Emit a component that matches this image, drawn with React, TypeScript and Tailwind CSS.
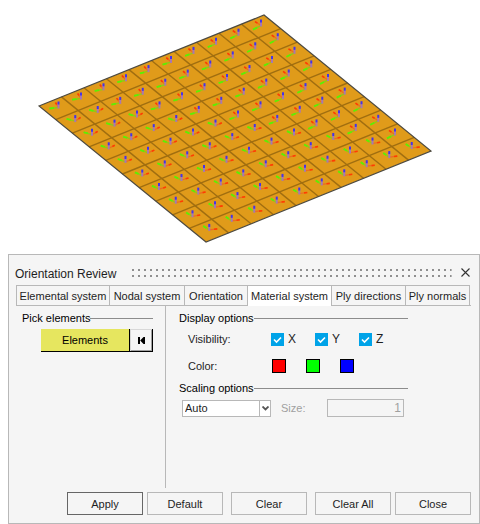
import { useState } from 'react';

const TABS = [
  { name: 'Elemental system', width: 'w-[94px]' },
  { name: 'Nodal system', width: 'w-[76px]' },
  { name: 'Orientation', width: 'w-[64px]' },
  { name: 'Material system', width: 'w-[85px]' },
  { name: 'Ply directions', width: 'w-[75px]' },
  { name: 'Ply normals', width: 'w-[65px]' },
];

const AXES = ['X', 'Y', 'Z'];

const COLORS = [
  { axis: 'X', fill: 'bg-[#ff0000]' },
  { axis: 'Y', fill: 'bg-[#00ff00]' },
  { axis: 'Z', fill: 'bg-[#0000ff]' },
];

const CELLS = 10;

// corners of the plate
const LEFT = [39, 106];
const TOP = [264, 15];
const RIGHT = [431, 151];
const BOTTOM = [206, 242];

const mix = (a: number, b: number, t: number) => a + (b - a) * t;

function Triad({ i, j }: { i: number; j: number }) {
  const x = 58.5 + 22.5 * i + 16.75 * j;
  const y = 107.5 - 9.1 * i + 13.6 * j;
  // the material axes flip across the diagonal of the mesh
  const above = i > j || (i === 0 && j === 0);
  const t = (above ? i : j) / (CELLS - 1);
  const red = above ? [mix(-3, -6, t), mix(-5, -4, t)] : [mix(5, 8, t), mix(-4, -1, t)];
  const green = above ? [mix(-9, -8, t), mix(1, 4, t)] : [mix(-9, -6, t), mix(-2, -4, t)];

  return (
    <g transform={`translate(${x} ${y})`} strokeWidth="1">
      <line x1="0" y1="0" x2={green[0]} y2={green[1]} stroke="#90c818" strokeWidth="1.4" />
      <line x1={green[0] * 0.5} y1={green[1] * 0.5} x2={green[0]} y2={green[1]} stroke="#5cf000" strokeWidth="1.8" />
      <line x1="0" y1="0" x2={red[0]} y2={red[1]} stroke="#ec6a20" strokeWidth="1.2" />
      <line x1={red[0] * 0.6} y1={red[1] * 0.6} x2={red[0]} y2={red[1]} stroke="#ff3d00" strokeWidth="1.6" />
      <line x1="0" y1="1" x2="0" y2="-4" stroke="#a878b0" strokeWidth="2" />
      <line x1="0" y1="-3" x2="0" y2="-6" stroke="#4434e8" strokeWidth="2" />
    </g>
  );
}

function Plate() {
  const steps = Array.from({ length: CELLS }, (_, n) => n);
  return (
    <svg viewBox="0 0 480 254" className="block w-full" role="img" aria-label="Plate mesh">
      <polygon points={[LEFT, TOP, RIGHT, BOTTOM].join(' ')} fill="#e09b1a" />
      {steps.slice(1).map((n) => {
        const t = n / CELLS;
        return (
          <g key={n} stroke="#a06e10" strokeWidth="1.4">
            <line
              x1={mix(LEFT[0], TOP[0], t)}
              y1={mix(LEFT[1], TOP[1], t)}
              x2={mix(BOTTOM[0], RIGHT[0], t)}
              y2={mix(BOTTOM[1], RIGHT[1], t)}
            />
            <line
              x1={mix(LEFT[0], BOTTOM[0], t)}
              y1={mix(LEFT[1], BOTTOM[1], t)}
              x2={mix(TOP[0], RIGHT[0], t)}
              y2={mix(TOP[1], RIGHT[1], t)}
            />
          </g>
        );
      })}
      <polygon points={[LEFT, TOP, RIGHT, BOTTOM].join(' ')} fill="none" stroke="#4d4a40" strokeWidth="1.2" />
      {steps.map((j) => steps.map((i) => <Triad key={`${i}-${j}`} i={i} j={j} />))}
    </svg>
  );
}

function GroupTitle({ children }: { children: string }) {
  return (
    <h3 className="flex h-4 items-center whitespace-nowrap text-black">
      {children}
      <span className="h-px flex-1 bg-[#8c8c8c]" />
    </h3>
  );
}

function AxisCheck({ axis }: { axis: string }) {
  return (
    <label className="flex w-11 items-center gap-1 text-[12px]">
      <span className="grid">
        <input
          type="checkbox"
          defaultChecked
          className="peer col-start-1 row-start-1 size-[13px] appearance-none border border-[#00a3e8] checked:bg-[#00a3e8]"
        />
        <svg
          viewBox="0 0 13 13"
          className="pointer-events-none invisible col-start-1 row-start-1 size-[13px] peer-checked:visible"
        >
          <path d="M3 6.5 L5.5 9 L10 4.5" fill="none" stroke="#fff" strokeWidth="1.6" />
        </svg>
      </span>
      {axis}
    </label>
  );
}

function ActionButton({ label, primary }: { label: string; primary?: boolean }) {
  return (
    <button
      type="button"
      className={`h-[23px] w-[76px] border bg-[#f5f5f5] ${primary ? 'border-[#666666]' : 'border-[#b8b8b8]'}`}
    >
      {label}
    </button>
  );
}

export default function App() {
  const [activeTab, setActiveTab] = useState('Material system');

  return (
    <div className="bg-white font-['Liberation_Sans',Arial,sans-serif] text-[11px] leading-4 text-[#1e1e1e]">
      <Plate />
      <section className="ml-2 border border-[#b8b8b8] bg-[#f5f5f5]">
        <header className="flex h-[30px] items-end gap-3 pr-2 pl-1.5">
          <h2 className="text-[12px] leading-[22px] whitespace-nowrap">Orientation Review</h2>
          <svg className="mb-2 ml-1 h-2 min-w-0 flex-1" aria-hidden="true">
            <defs>
              <pattern id="grip" width="6" height="6" patternUnits="userSpaceOnUse">
                <rect width="2" height="2" fill="#8f8f8f" />
              </pattern>
            </defs>
            <rect width="100%" height="8" fill="url(#grip)" />
          </svg>
          <button type="button" aria-label="Close panel" className="mb-[7px] -ml-1 p-px">
            <svg viewBox="0 0 9 9" className="size-[9px]">
              <path d="M0.5 0.5 L8.5 8.5 M8.5 0.5 L0.5 8.5" stroke="#333" strokeWidth="1.1" />
            </svg>
          </button>
        </header>

        <div role="tablist" className="mr-2 ml-[7px] flex h-[21px] border-b border-[#b8b8b8]">
          {TABS.map((tab) => {
            const active = tab.name === activeTab;
            return (
              <button
                key={tab.name}
                type="button"
                role="tab"
                aria-selected={active}
                onClick={() => setActiveTab(tab.name)}
                className={`-mr-px shrink-0 border border-b-0 border-[#b8b8b8] whitespace-nowrap ${tab.width} ${
                  active ? '-mb-px bg-white' : ''
                }`}
              >
                {tab.name}
              </button>
            );
          })}
        </div>

        <div className="flex h-[182px]">
          <div className="w-[157px] border-r border-[#b8b8b8] pt-1 pr-3 pl-[13px]">
            <GroupTitle>Pick elements</GroupTitle>
            <div className="mt-[3px] ml-[19px] flex h-[23px]">
              <button type="button" className="flex-1 border-r border-b border-black bg-[#e6e65f] text-black">
                Elements
              </button>
              <button
                type="button"
                aria-label="Reset selection"
                className="flex w-[23px] items-center justify-center border-r border-b border-black bg-[#f5f5f5] shadow-[inset_1px_1px_0_#d8d8d8,inset_-1px_-1px_0_#a0a0a0]"
              >
                <svg viewBox="0 0 7 7" className="size-[7px]">
                  <path d="M0 0 H2 V7 H0 Z M7 0 V7 H5.5 L2.2 3.5 L5.5 0 Z" fill="#000" />
                </svg>
              </button>
            </div>
          </div>

          <div className="flex-1 pt-1 pl-[13px]">
            <div className="w-[229px]">
              <GroupTitle>Display options</GroupTitle>
              <div className="mt-1 flex h-[18px] items-center pl-[9px]">
                <span className="w-[83px]">Visibility:</span>
                {AXES.map((axis) => (
                  <AxisCheck key={axis} axis={axis} />
                ))}
              </div>
              <div className="mt-2 flex h-5 items-center pl-[9px]">
                <span className="w-[84px]">Color:</span>
                <div className="flex gap-5">
                  {COLORS.map((color) => (
                    <button
                      key={color.axis}
                      type="button"
                      aria-label={`${color.axis} color`}
                      className={`size-[14px] border border-black ${color.fill}`}
                    />
                  ))}
                </div>
              </div>
              <div className="mt-1">
                <GroupTitle>Scaling options</GroupTitle>
              </div>
              <div className="mt-[3px] flex items-center pr-1 pl-[3px]">
                <div className="grid w-[89px] items-center">
                  <select
                    aria-label="Scaling"
                    className="col-start-1 row-start-1 h-[17px] appearance-none border border-[#b8b8b8] bg-white pl-0.5 leading-[15px]"
                  >
                    <option>Auto</option>
                    <option>Manual</option>
                  </select>
                  <span className="pointer-events-none col-start-1 row-start-1 flex h-[17px] w-3 items-center justify-center justify-self-end border-l border-[#b8b8b8]">
                    <svg viewBox="0 0 7 5" className="h-[5px] w-[7px]">
                      <path d="M0.5 0.5 L3.5 3.5 L6.5 0.5" fill="none" stroke="#555" strokeWidth="1.8" />
                    </svg>
                  </span>
                </div>
                <label htmlFor="size" className="w-14 pl-2.5 text-[#a0a0a0]">
                  Size:
                </label>
                <input
                  id="size"
                  type="text"
                  disabled
                  defaultValue="1"
                  className="h-[18px] min-w-0 flex-1 border border-[#b8b8b8] bg-[#f5f5f5] pr-0.5 text-right text-[12px] text-[#a0a0a0]"
                />
              </div>
            </div>
          </div>
        </div>

        <footer className="flex justify-end gap-2 pt-1 pr-2 pb-2">
          <div className="flex gap-1">
            <ActionButton label="Apply" primary />
            <ActionButton label="Default" />
          </div>
          <ActionButton label="Clear" />
          <div className="flex gap-1">
            <ActionButton label="Clear All" />
            <ActionButton label="Close" />
          </div>
        </footer>
      </section>
    </div>
  );
}
